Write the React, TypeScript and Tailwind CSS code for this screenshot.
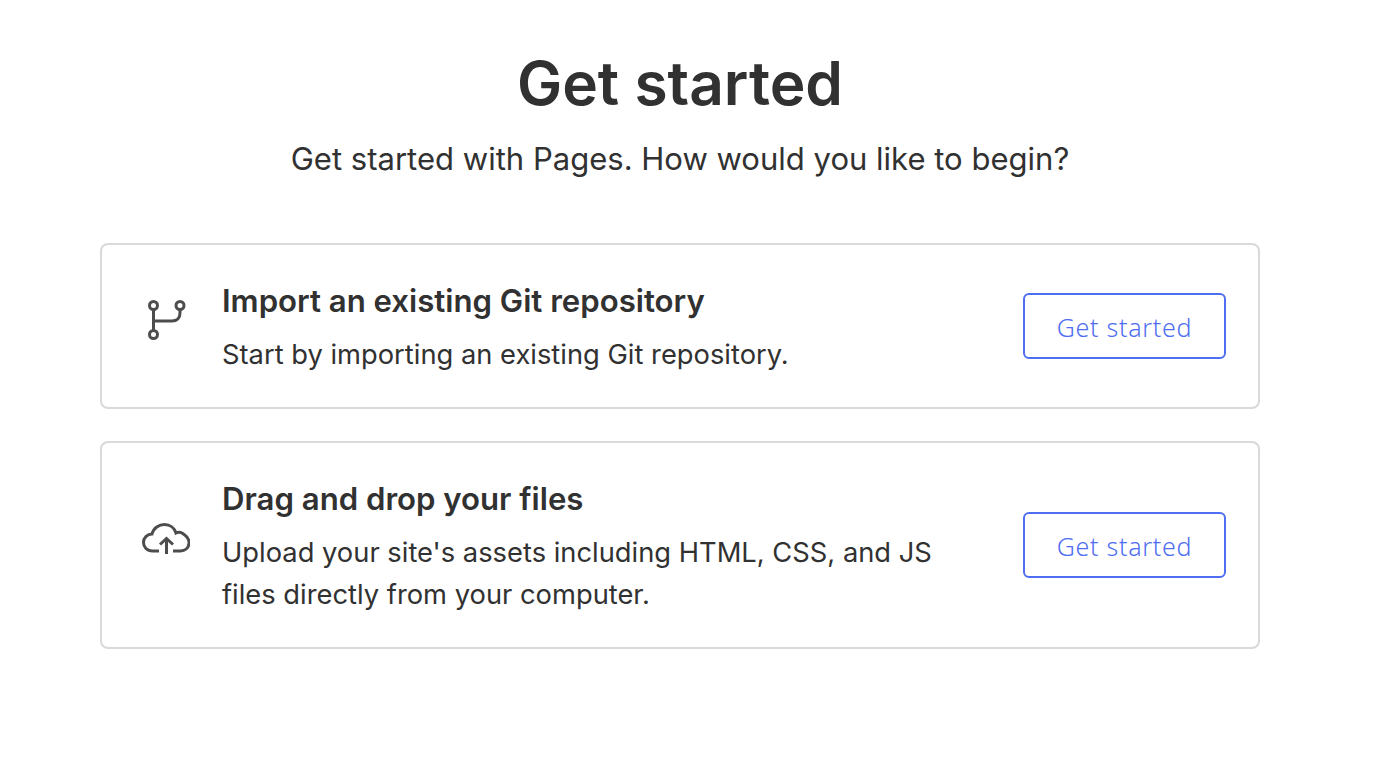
function GitIcon() {
  return (
    <svg width="48" height="48" viewBox="0 0 48 48" fill="none" stroke="#4d4d4d" strokeWidth="3">
      <circle cx="11.500" cy="9.500" r="4" />
      <circle cx="11.500" cy="38.500" r="4" />
      <circle cx="38" cy="9.500" r="4" />
      <path d="M11.500 13.500V34.500" />
      <path d="M11.500 25H30C35 25 38 22 38 17V13.500" />
    </svg>
  );
}

function CloudIcon() {
  return (
    <svg width="48" height="48" viewBox="0 0 48 48" fill="none" stroke="#4d4d4d" strokeWidth="3">
      <path d="M17 36H10.500C5 36 1.500 32 1.500 27.500C1.500 22.500 5.500 19 10 19C11.500 13 17 9.500 22.500 9.500C28 9.500 32.500 13 34 18C36 17 39 17 41.500 19C45 21.500 47.500 24.500 47 28.500C46.500 33 43 36 38.500 36H31" />
      <path d="M24.500 39V24M18 29.500L24.500 23.500L31 29.500" />
    </svg>
  );
}

function Card({ icon, title, children, h }: { icon: React.ReactNode; title: string; children: React.ReactNode; h: string }) {
  return (
    <div className={`flex items-center rounded-lg border-2 border-[#d9d9d9] pl-10 pr-8 ${h}`}>
      <div className="mb-[12px] w-20 shrink-0">{icon}</div>
      <div className="w-[760px] shrink-0 pt-[4px]">
        <h2 className="text-[31.150px] leading-[42px] font-semibold text-[#313131]">{title}</h2>
        <p className="mt-[12px] text-[27.320px] leading-[42px] text-[#313131]">{children}</p>
      </div>
      <button className="ml-auto h-[66px] w-[203px] rounded-md border-2 border-[#4f6ef2] pt-[3px] font-['Noto_Sans',sans-serif] text-[25px] font-light tracking-[0.7px] text-[#4f6ef2]">
        Get started
      </button>
    </div>
  );
}

export default function App() {
  return (
    <div className="min-h-[768px] bg-white pt-[45px] font-['Inter',sans-serif] text-[#313131]">
      <div className="ml-[100px] w-[1160px]">
        <h1 className="text-center text-[60.400px] leading-[76px] font-semibold">Get started</h1>
        <p className="mt-[18px] text-center text-[31.040px] leading-[40px]">Get started with Pages. How would you like to begin?</p>
        <div className="mt-[64px] flex flex-col gap-8">
          <Card icon={<GitIcon />} title="Import an existing Git repository" h="h-[166px]">
            Start by importing an existing Git repository.
          </Card>
          <Card icon={<CloudIcon />} title="Drag and drop your files" h="h-[208px]">
            Upload your site's assets including HTML, CSS, and JS files directly from your computer.
          </Card>
        </div>
      </div>
    </div>
  );
}
